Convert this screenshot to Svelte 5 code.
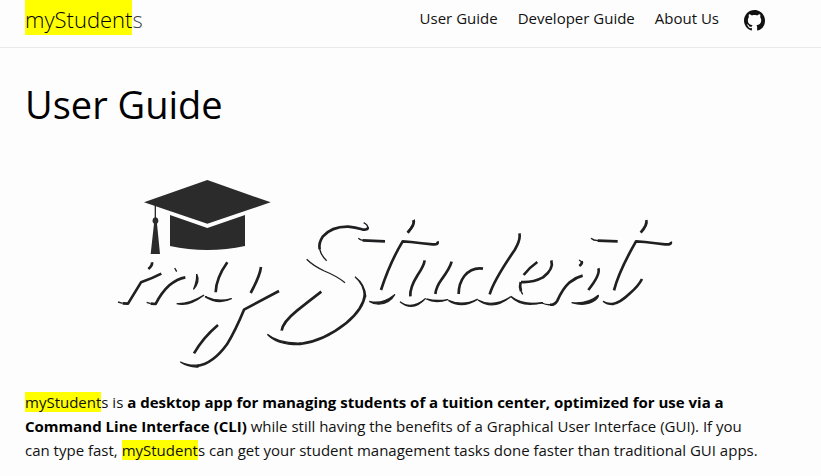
<script>
  const links = ['User Guide', 'Developer Guide', 'About Us'];

  // Artwork of the banner, one group for each part of the lettering.
  // "lines" are even pen strokes, "fine" are hairlines, "bowls" are crescents that taper at both ends.
  const parts = [
    {
      x: 110, y: 240,
      lines: [
        'M126 67Q128 77 115 87', 'M38 190L54 191L93 127Q125 116 154 101',
        'M122 191L137 192Q154 158 178 136Q202 116 226 112',
        'M352 67Q318 115 317 157', 'M453 81Q450 107 422 159',
        'M507 153L402 209Q377 270 351 313Q309 371 262 378',
        'M324 255Q279 293 252 340'
      ],
      fine: ['M24 186L38 190', 'M110 187L122 191', 'M194 84L200 95'],
      bowls: ['M260 102Q261 124 251 147Q271 124 260 102', 'M200 191Q237 193 281 166Q237 201 200 191', 'M285 170Q325 188 364 176Q325 196 285 170', 'M211 366Q235 378 266 375L264 381Q235 382 211 366']
    },
    {
      x: 260, y: 200,
      lines: ['M323 82Q325 91 306 88Q285 82 265 80Q215 79 188 110Q175 129 179 148', 'M184 275Q150 301 111 332Q68 367 65 392', 'M308 121L375 124', 'M461 60Q465 73 443 98', 'M315 284Q310 327 258 370Q190 424 120 432'],
      fine: ['M311 68Q323 74 324 84', 'M179 147Q184 168 200 182', 'M295 115Q300 120 309 121', 'M140 178Q160 198 193 213Q230 228 255 248'],
      bowls: ['M285 230Q316 254 317 290L313 289Q312 253 285 230', 'M22 403Q55 431 122 429L120 434Q50 435 22 403', 'M328 304Q365 315 404 284Q396 298 385 304Q356 321 328 304']
    },
    {
      x: 390, y: 200,
      lines: ['M142 124Q147 135 128 133Q95 130 63 126L38 124Q0 187 -27 270', 'M71 60Q75 73 53 98', 'M104 181Q102 197 83 225Q59 263 61 289', 'M185 185Q179 206 155 238Q138 262 136 282', 'M279 206Q246 201 223 228Q206 250 206 282', 'M388 100Q393 117 374 150Q312 240 299 283', 'M442 186Q420 201 401 225', 'M392 246Q388 260 393 273'],
      fine: ['M392 271L398 283'],
      bowls: ['M30 305Q64 331 106 296Q69 337 30 305', 'M109 297Q139 305 173 299Q136 311 109 297', 'M175 301Q216 320 262 298Q215 328 175 301', 'M264 300Q308 324 361 291Q310 333 264 300', 'M362 289Q397 317 457 308Q394 324 362 289']
    },
    {
      x: 530, y: 200,
      lines: ['M64 181Q72 207 39 232Q9 248 -27 246', 'M60 314Q73 316 82 302Q98 266 119 247Q138 232 158 227', 'M155 184Q158 191 148 198', 'M205 205Q212 224 175 270', 'M203 122L263 124', 'M349 60Q353 74 332 98', 'M422 125Q426 135 405 133Q378 130 345 126L318 124Q267 213 252 271', 'M336 237Q326 257 300 280Q270 309 248 312'],
      fine: ['M36 309Q48 315 60 314', 'M147 180L156 186', 'M183 115Q190 122 204 122', 'M39 308Q24 313 9 310'],
      bowls: ['M125 308Q174 313 205 286Q206 292 195 301Q169 320 125 308', 'M219 304Q231 312 249 310L249 314Q230 314 219 304']
    }
  ];
</script>

<header>
  <div class="wrapper bar">
    <a class="title" href="#top"><mark>myStudent</mark>s</a>
    <nav aria-label="Site">
      {#each links as link}
        <a href="#top">{link}</a>
      {/each}
      <a class="github" href="#top" aria-label="GitHub">
        <svg viewBox="0 0 16 16" aria-hidden="true">
          <path fill-rule="evenodd" d="M8 0C3.58 0 0 3.58 0 8c0 3.54 2.29 6.53 5.47 7.59.4.07.55-.17.55-.38 0-.19-.01-.82-.01-1.49-2.01.37-2.53-.49-2.69-.94-.09-.23-.48-.94-.82-1.13-.28-.15-.68-.52-.01-.53.63-.01 1.08.58 1.23.82.72 1.21 1.87.87 2.33.66.07-.52.28-.87.51-1.07-1.78-.2-3.64-.89-3.64-3.95 0-.87.31-1.59.82-2.15-.08-.2-.36-1.02.08-2.12 0 0 .67-.21 2.2.82.64-.18 1.32-.27 2-.27.68 0 1.36.09 2 .27 1.53-1.04 2.2-.82 2.2-.82.44 1.1.16 1.92.08 2.12.51.56.82 1.27.82 2.15 0 3.07-1.87 3.75-3.65 3.95.29.25.54.73.54 1.48 0 1.07-.01 1.93-.01 2.2 0 .21.15.46.55.38A8.013 8.013 0 0016 8c0-4.42-3.58-8-8-8z" />
        </svg>
      </a>
    </nav>
  </div>
</header>

<main class="wrapper" id="top">
  <h1>User Guide</h1>
  <svg class="banner" viewBox="25 145 740 236" role="img" aria-label="myStudent">
    <g transform="translate(110 170) scale(.33333)" fill="#2b2b2b">
      <path d="M292 30L482 97L292 161L102 97Z" />
      <path d="M180 135L292 174L405 135V228Q350 240 292 240Q235 240 180 228Z" />
      <path d="M134 105H138V142A11 11 0 0 1 141 161L150 252H122L132 161A11 11 0 0 1 134 142Z" />
    </g>
    {#each parts as part}
      <g transform="translate({part.x} {part.y}) scale(.33333)">
        {#each part.lines as d}<path class="line" {d} />{/each}
        {#each part.fine as d}<path class="fine" {d} />{/each}
        {#each part.bowls as d}<path class="bowl" {d} />{/each}
      </g>
    {/each}
  </svg>
  <p>
    <mark>myStudent</mark>s is <strong>a desktop app for managing students of a tuition center, optimized for use via a
    Command Line Interface (CLI)</strong> while still having the benefits of a Graphical User Interface (GUI). If you
    can type fast, <mark>myStudent</mark>s can get your student management tasks done faster than traditional GUI apps.
  </p>
</main>

<style>
  :global(body) {
    background: #fdfdfd;
    color: #111;
    font-family: "Segoe UI", "Open Sans", "Noto Sans", sans-serif;
    font-size: 15px;
    line-height: 24px;
  }

  .wrapper {
    max-width: 740px;
    padding: 0 25px;
  }

  header {
    border-bottom: 1px solid #e8e8e8;
  }

  .bar {
    display: flex;
    justify-content: space-between;
    height: 47px;
  }

  a {
    color: #111;
    text-decoration: none;
  }

  mark {
    background: #ff0;
    color: inherit;
  }

  strong {
    color: #000;
  }

  .title {
    font-size: 22px;
    font-weight: 300;
    line-height: 38px;
    color: #424242;
  }

  .title mark {
    padding: 4px 0 1px;
    color: #000;
  }

  nav {
    display: flex;
    gap: 20px;
    line-height: 36px;
  }

  .github {
    display: flex;
    align-items: center;
    height: 40px;
    margin-left: 5px;
  }

  .github svg {
    width: 21px;
    height: 21px;
    fill: #111;
  }

  h1 {
    margin: 28px 0 13px;
    font-size: 38px;
    font-weight: 400;
    line-height: 56px;
    color: #000;
  }

  .banner {
    display: block;
    width: 100%;
  }

  .line,
  .fine {
    fill: none;
    stroke: #202022;
    stroke-width: 8;
    stroke-linejoin: round;
  }

  .fine {
    stroke-width: 4;
  }

  .bowl {
    fill: #202022;
    stroke: #202022;
    stroke-width: 4;
    stroke-linejoin: round;
  }

  p {
    margin: 9px 0 15px;
  }
</style>
